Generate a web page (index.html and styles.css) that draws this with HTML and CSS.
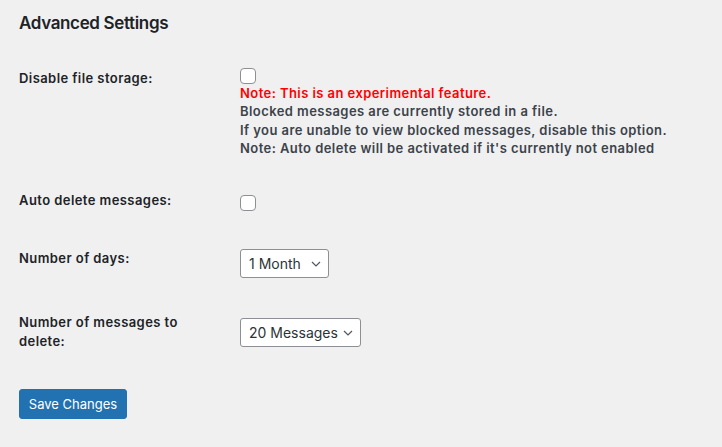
FILE: index.html
```html
<!DOCTYPE html>
<html>
<head>
<meta charset="utf-8">
<link rel="stylesheet" href="styles.css">
</head>
<body>
<div class="wrap">
  <h2 class="title">Advanced Settings</h2>
  <div class="row row-1">
    <div class="th">Disable file storage:</div>
    <div class="td">
      <input type="checkbox" class="check">
      <div class="desc">
        <div class="warn">Note: This is an experimental feature.</div>
        <div>Blocked messages are currently stored in a file.</div>
        <div>If you are unable to view blocked messages, disable this option.</div>
        <div>Note: Auto delete will be activated if it's currently not enabled</div>
      </div>
    </div>
  </div>
  <div class="row row-2">
    <div class="th">Auto delete messages:</div>
    <div class="td"><input type="checkbox" class="check"></div>
  </div>
  <div class="row row-3">
    <div class="th">Number of days:</div>
    <div class="td">
      <div class="select sel-days"><span>1 Month</span>
        <svg class="chev" width="10" height="6" viewBox="0 0 10 6"><path d="M1 1l4 4 4-4" fill="none" stroke="#50575e" stroke-width="1.2"/></svg>
      </div>
    </div>
  </div>
  <div class="row row-4">
    <div class="th">Number of messages to<br>delete:</div>
    <div class="td">
      <div class="select sel-msgs"><span>20 Messages</span>
        <svg class="chev" width="10" height="6" viewBox="0 0 10 6"><path d="M1 1l4 4 4-4" fill="none" stroke="#50575e" stroke-width="1.2"/></svg>
      </div>
    </div>
  </div>
  <div class="submit"><button class="button-primary">Save Changes</button></div>
</div>
</body>
</html>
```
FILE: styles.css
```css
html, body {
  margin: 0;
  padding: 0;
  background: #f0f0f1;
}
body {
  font-family: Inter, "Liberation Sans", sans-serif;
  font-size: 13px;
  color: #1d2327;
}
.wrap {
  padding-left: 19px;
}
.title {
  margin: 0;
  padding-top: 12px;
  font-size: 17px;
  line-height: 22px;
  font-weight: 600;
  letter-spacing: -0.35px;
  color: #1d2327;
}
.row {
  display: flex;
  align-items: flex-start;
}
.th {
  width: 221px;
  flex: none;
  font-weight: 600;
  letter-spacing: 0.43px;
  line-height: 19px;
  color: #1d2327;
}
.td {
  flex: 1;
}
.check {
  appearance: none;
  -webkit-appearance: none;
  display: block;
  margin: 0;
  width: 16px;
  height: 16px;
  border: 1px solid #8c8f94;
  border-radius: 4px;
  background: #fff;
  box-sizing: border-box;
}
.desc {
  font-weight: 600;
  letter-spacing: 0.43px;
  line-height: 18.3px;
  color: #3c434a;
}
.warn {
  color: #ff0000;
}
.row-1 { margin-top: 15px; padding-bottom: 15px; }
.row-1 .th { padding-top: 20px; }
.row-1 .td { padding-top: 19px; }
.row-2 { height: 57px; }
.row-2 .th { padding-top: 19px; }
.row-2 .td { padding-top: 23px; }
.row-3 { height: 64px; }
.row-3 .th { padding-top: 20px; }
.row-3 .td { padding-top: 20px; }
.row-4 { height: 76px; }
.row-4 .th { padding-top: 20px; }
.row-4 .td { padding-top: 25px; }
.select {
  display: inline-flex;
  align-items: center;
  justify-content: space-between;
  box-sizing: border-box;
  height: 29px;
  padding: 0 7px 0 8px;
  border: 1px solid #8c8f94;
  border-radius: 3px;
  background: #fff;
  font-size: 14px;
  font-weight: 400;
  color: #2c3338;
}
.chev {
  display: block;
  flex: none;
}
.sel-days { width: 89px; }
.sel-msgs { width: 121px; }
.submit {
  padding-top: 20px;
}
.button-primary {
  display: block;
  height: 30px;
  width: 108px;
  padding: 0;
  border: 1px solid #2271b1;
  border-radius: 3px;
  background: #2271b1;
  color: #fff;
  font-family: inherit;
  font-size: 13px;
  font-weight: 400;
}
```
